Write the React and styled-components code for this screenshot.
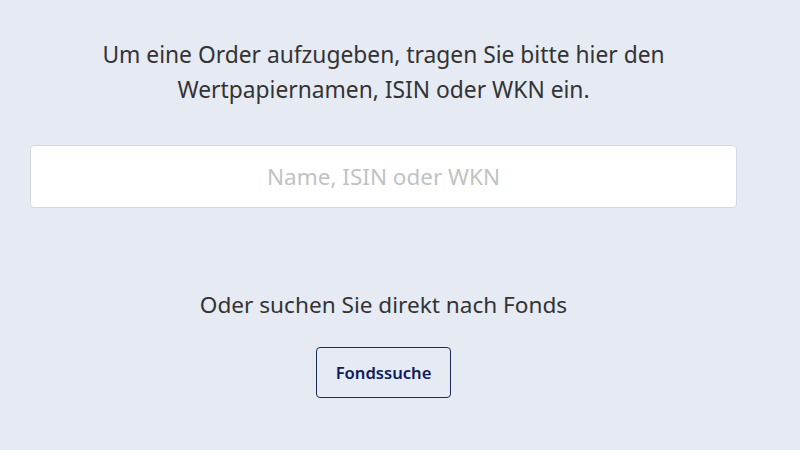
import React, { useState } from "react";
import styled, { createGlobalStyle } from "styled-components";

const GlobalStyle = createGlobalStyle`
  html, body {
    margin: 0;
    padding: 0;
    background-color: #e6eaf2;
    font-family: "Noto Sans", "Open Sans", sans-serif;
  }
`;

const Page = styled.div`
  width: 707px;
  margin-left: 30px;
  padding-top: 37px;
  display: flex;
  flex-direction: column;
  align-items: center;
`;

const Intro = styled.p`
  margin: 0 0 38px 0;
  font-size: 22.8px;
  line-height: 35px;
  color: #333333;
  text-align: center;
  width: 620px;
`;

const SearchInput = styled.input`
  box-sizing: border-box;
  width: 100%;
  height: 63px;
  border: 1px solid #d3d9e3;
  border-radius: 4px;
  background-color: white;
  text-align: center;
  font-family: inherit;
  font-size: 22.5px;
  color: #333;
  &::placeholder {
    color: #c2c2c2;
  }
  &:focus {
    outline: none;
  }
`;

const SubText = styled.div`
  margin-top: 81px;
  font-size: 22.6px;
  color: #333333;
`;

const OutlineButton = styled.button`
  margin-top: 27px;
  width: 135px;
  height: 51px;
  border: 1px solid #1c2a5c;
  border-radius: 4px;
  background-color: transparent;
  color: #0b1a63;
  font-family: inherit;
  font-size: 16.6px;
  font-weight: 600;
  cursor: pointer;
`;

const App = () => {
  const [query, setQuery] = useState("");

  return (
    <>
      <GlobalStyle />
      <Page>
        <Intro>
          Um eine Order aufzugeben, tragen Sie bitte hier den Wertpapiernamen,
          ISIN oder WKN ein.
        </Intro>
        <SearchInput
          placeholder="Name, ISIN oder WKN"
          value={query}
          onChange={(e) => setQuery(e.target.value)}
        />
        <SubText>Oder suchen Sie direkt nach Fonds</SubText>
        <OutlineButton>Fondssuche</OutlineButton>
      </Page>
    </>
  );
};

export default App;
